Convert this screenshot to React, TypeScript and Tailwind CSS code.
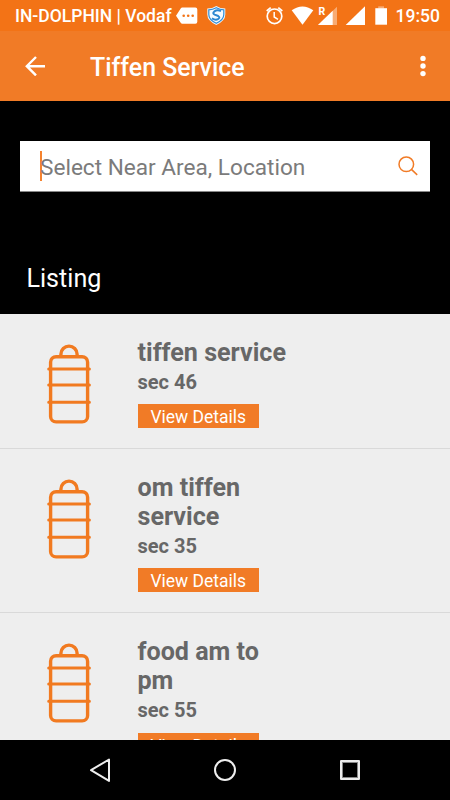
import { useState } from "react";

type Listing = {
  id: number;
  name: string;
  area: string;
};

const LISTINGS: Listing[] = [
  { id: 1, name: "tiffen service", area: "sec 46" },
  { id: 2, name: "om tiffen service", area: "sec 35" },
  { id: 3, name: "food am to pm", area: "sec 55" },
];

function StatusBar() {
  return (
    <div className="flex h-[31px] shrink-0 items-center bg-[#f37316] pl-[15px] text-[17.5px] font-medium text-white">
      <span className="w-[161px] pt-px whitespace-nowrap">IN-DOLPHIN | Vodaf</span>
      <svg className="h-[31px] w-[50px]" viewBox="176 0 50 31">
        <path d="M182.3 7.5h13q2 0 2 2v12.3q0 2-2 2h-13q-1 0-1.6-1L176 15.7l4.7-7.2q.6-1 1.6-1z" fill="#fff" />
        <circle cx="183.7" cy="15.7" r="1.3" fill="#f37316" />
        <circle cx="188.2" cy="15.7" r="1.3" fill="#f37316" />
        <circle cx="192.7" cy="15.7" r="1.3" fill="#f37316" />
        <path d="M216.3 6q4 2.6 9 2.6v6q0 6.5-9 10.4-9-3.9-9-10.4v-6q5 0 9-2.6z" fill="#eef7fc" />
        <path d="M216.3 7.7q3.6 2 7.5 2.2v4.7q0 5.3-7.5 8.7-7.5-3.4-7.5-8.7V9.9q3.9-.2 7.5-2.2z" fill="#f5fbff" stroke="#318dd6" strokeWidth="1.2" />
        <path d="M221 11.2q-3.7-1.8-6.6.2-2.4 2 .3 3.3l3.5 1.3q2.4 1.4-.3 3.2-2.3 1.3-6-.8" fill="none" stroke="#2b86d0" strokeWidth="2" />
      </svg>
      <svg className="ml-[40px] h-[31px] w-[122px]" viewBox="266 0 122 31">
        <circle cx="274.5" cy="16.3" r="7.3" fill="none" stroke="#fff" strokeWidth="1.7" />
        <path d="M266.7 11l4-3.4M282.3 11l-4-3.4" stroke="#fff" strokeWidth="1.7" />
        <path d="M274.2 12v5l3.8 2.3" fill="none" stroke="#fff" strokeWidth="1.5" />
        <path d="M302.5 24.7L291.7 10.3q10.8-7.6 21.6 0z" fill="#fff" />
        <path d="M337 6.7V25h-19z" fill="#fff" fillOpacity=".4" />
        <path d="M332.7 10.7V25H318z" fill="#fff" />
        <text x="318.6" y="15.3" fill="#fff" fontFamily="Roboto, sans-serif" fontSize="10.5" fontWeight="700" textLength="6">
          R
        </text>
        <path d="M365 6.3V25h-19.3z" fill="#fff" />
        <path d="M378.2 6.3h5.8v2.2h-5.8z" fill="#fff" fillOpacity=".4" />
        <path d="M375.3 8.2H387v16.5h-11.7z" fill="#fff" />
      </svg>
      <span className="ml-[7.5px] pt-px whitespace-nowrap">19:50</span>
    </div>
  );
}

function AppBar() {
  return (
    <header className="flex h-[70px] shrink-0 items-center bg-[#f17b26] text-white">
      <button type="button" aria-label="Back" className="ml-[25px]">
        <svg className="h-5 w-5" viewBox="0 0 20 20" fill="none" stroke="currentColor" strokeWidth="2.4">
          <path d="M20 10.2H2.2M11 1L1.8 10.2 11 19.4" />
        </svg>
      </button>
      <h1 className="ml-[45px] pt-[3px] text-[24.9px] leading-[30px] font-medium">Tiffen Service</h1>
      <button type="button" aria-label="More options" className="mr-[24.5px] ml-auto">
        <svg className="block h-[22px] w-[6px]" viewBox="0 0 6 22" fill="currentColor">
          <circle cx="3" cy="3.4" r="2.7" />
          <circle cx="3" cy="11" r="2.7" />
          <circle cx="3" cy="18.6" r="2.7" />
        </svg>
      </button>
    </header>
  );
}

function TiffinIcon() {
  return (
    <svg
      className="h-[80px] w-[44px] shrink-0"
      viewBox="0 0 44 80"
      fill="none"
      stroke="#f17a20"
      strokeWidth="3.4"
      strokeLinecap="round"
    >
      <path d="M13.9 11.5v-1.3a8.1 8.1 0 0 1 16.2 0v1.3" />
      <rect x="3.6" y="12.7" width="37" height="65.2" rx="5.5" />
      <path d="M1.7 25.1h40.7M1.7 40.9h40.7M1.7 58.3h40.7" strokeWidth="3" />
    </svg>
  );
}

function ListingRow({ listing }: { listing: Listing }) {
  return (
    <li className="flex shrink-0 items-start border-b border-[#d9d9d9] pb-[19.5px] pl-[47px]">
      <div className="pt-[30px]">
        <TiffinIcon />
      </div>
      <div className="ml-[46.5px] w-[160px] pt-[24px]">
        <h3 className="max-w-[150px] text-[25.1px] leading-[29.2px] font-bold">{listing.name}</h3>
        <p className="mt-[3.8px] text-[20px] leading-[23.4px] font-bold">{listing.area}</p>
        <button
          type="button"
          className="mt-[10.2px] block h-[24px] w-[121.5px] bg-[#f17b26] text-[17.5px] leading-[26px] text-white"
        >
          View Details
        </button>
      </div>
    </li>
  );
}

function NavBar() {
  return (
    <nav className="flex h-[60px] shrink-0 items-center bg-black pl-[88px]">
      <svg className="h-[26px] w-[24px]" viewBox="0 0 24 26" fill="none" stroke="#eee" strokeWidth="2" strokeLinejoin="round">
        <path d="M21 2.5v21.4L3 13.2z" />
      </svg>
      <svg className="ml-[101px] h-[24px] w-[24px]" viewBox="0 0 24 24" fill="none" stroke="#eee" strokeWidth="2">
        <circle cx="12" cy="12" r="10" />
      </svg>
      <div className="ml-[103px] h-[20px] w-[20px] rounded-[1px] border-2 border-[#eee]">
        <div className="h-full w-full border border-[#888]" />
      </div>
    </nav>
  );
}

export default function App() {
  const [query, setQuery] = useState("");

  return (
    <div className="flex h-[800px] w-[450px] flex-col overflow-hidden bg-black font-['Roboto',sans-serif]">
      <StatusBar />
      <AppBar />

      <section className="h-[212.6px] shrink-0 px-[20px] pt-[40px]">
        <div className="flex h-[51px] items-center border-b border-[#888] bg-white pr-[12px] pl-[20px]">
          <span className="-mr-[2px] h-[30px] w-[2px] bg-[#f5832f]" />
          <input
            value={query}
            onChange={(event) => setQuery(event.target.value)}
            placeholder="Select Near Area, Location"
            className="h-[32px] min-w-0 flex-1 pt-[4px] text-[22.6px] text-[#666] caret-[#f17b26] outline-none placeholder:text-[#7b7b7b]"
          />
          <svg className="h-[20px] w-[20px]" viewBox="0 0 20 20" fill="none" stroke="#f17b26" strokeWidth="1.5">
            <circle cx="8.3" cy="8.3" r="7.3" />
            <path d="M13.4 13.4l5.8 5.5" />
          </svg>
        </div>
        <h2 className="mt-[72px] ml-[6.5px] text-[25.1px] leading-[30px] text-white">Listing</h2>
      </section>

      <ul className="flex min-h-0 flex-1 flex-col overflow-hidden bg-[#eee] text-[#676767]">
        {LISTINGS.map((listing) => (
          <ListingRow key={listing.id} listing={listing} />
        ))}
      </ul>

      <NavBar />
    </div>
  );
}
